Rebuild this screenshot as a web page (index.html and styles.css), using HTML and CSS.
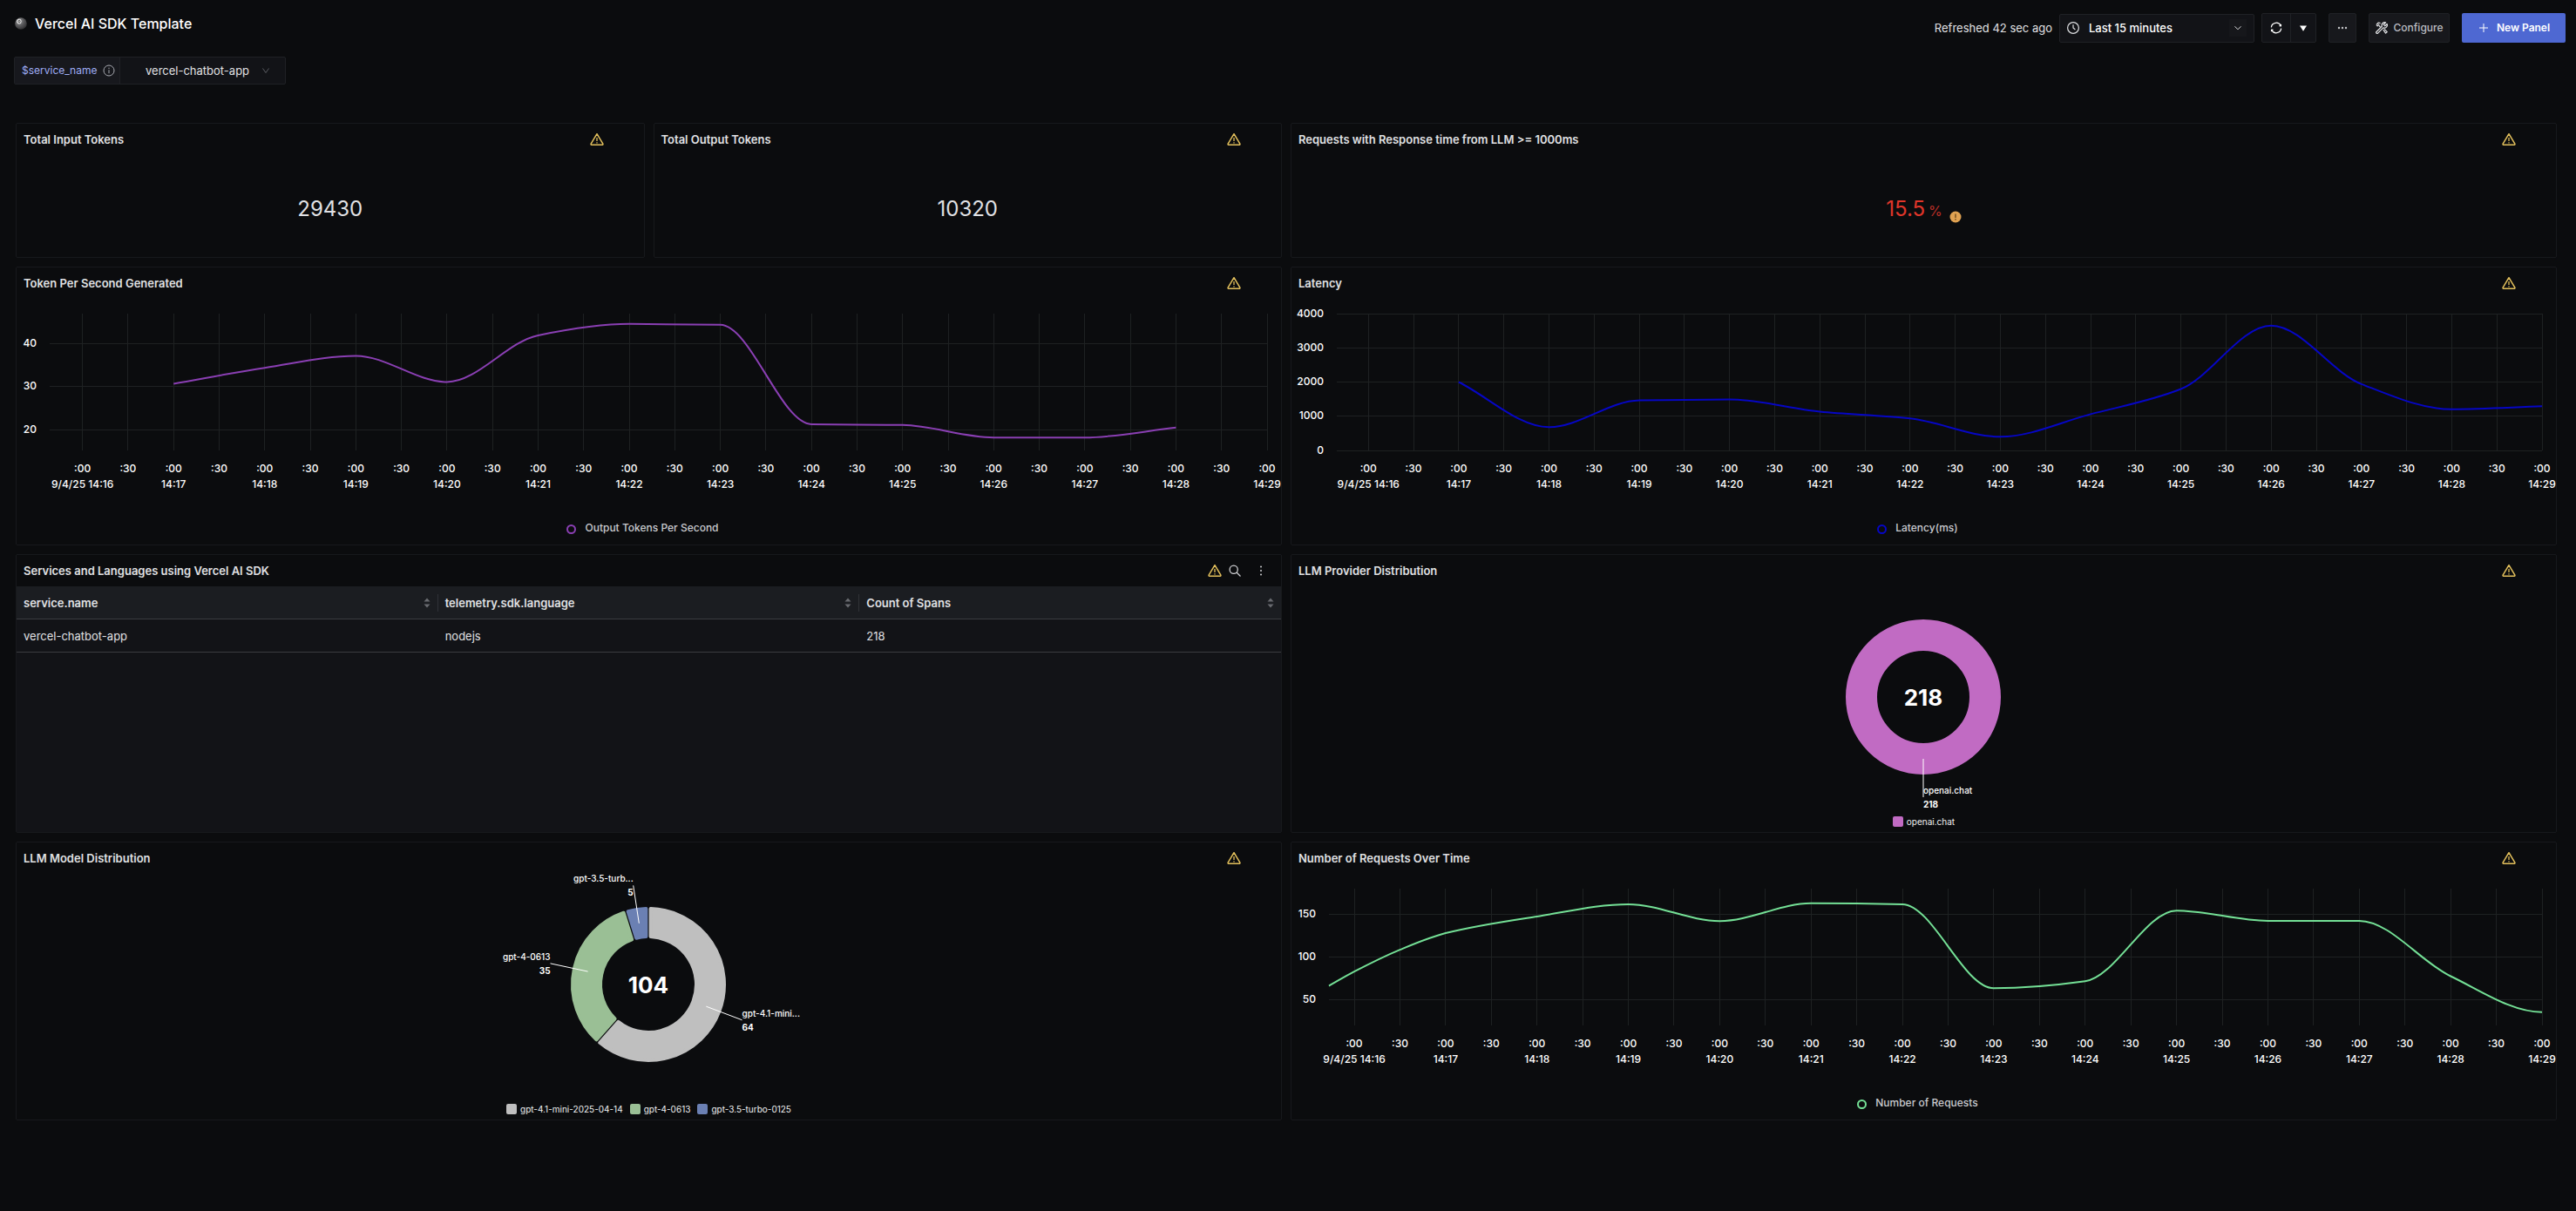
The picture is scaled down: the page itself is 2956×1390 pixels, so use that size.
FILE: index.html
```html
<!DOCTYPE html>
<html lang="en">
<head>
<meta charset="utf-8">
<meta name="viewport" content="width=device-width, initial-scale=1">
<title>Vercel AI SDK Template</title>
<link rel="stylesheet" href="styles.css">
</head>
<body>
<svg class="sprite" aria-hidden="true">
  <symbol id="warning" viewBox="0 0 16 16">
    <path d="M8 1.7 14.9 13.2a.7.7 0 0 1-.6 1H1.7a.7.7 0 0 1-.6-1Z" fill="none" stroke="currentColor" stroke-width="1.5" stroke-linejoin="round"/>
    <path d="M8 6v4M8 11.2v1.3" stroke="currentColor" stroke-width="1.3"/>
  </symbol>
  <symbol id="sorter" viewBox="0 0 8 12">
    <path d="M4 .5 7.5 4.5H.5ZM4 11.5 7.5 7.5H.5Z" fill="currentColor"/>
  </symbol>
</svg>

<header class="topbar">
  <div class="title-block">
    <svg class="ball" viewBox="0 0 14 14" aria-hidden="true">
      <defs><radialGradient id="ball-fill" cx=".35" cy=".3" r=".75"><stop offset="0" stop-color="#a5a5a5"/><stop offset=".5" stop-color="#5c5c5e"/><stop offset="1" stop-color="#303032"/></radialGradient></defs>
      <circle cx="7" cy="7" r="6.8" fill="url(#ball-fill)"/>
      <ellipse cx="5" cy="4.6" rx="2.6" ry="2.9" fill="#e8e8e8"/>
      <ellipse cx="5.1" cy="4.6" rx="1" ry="1.5" fill="none" stroke="#333" stroke-width=".9"/>
    </svg>
    <h1>Vercel AI SDK Template</h1>
  </div>
  <div class="actions">
    <span class="refreshed">Refreshed 42 sec ago</span>
    <div class="time-range">
      <svg class="icon16" viewBox="0 0 16 16" fill="none" stroke="currentColor" stroke-width="1.2" aria-hidden="true"><circle cx="8" cy="8" r="6.4"/><path d="M8 4.3V8l2.4 2"/></svg>
      <select aria-label="Time range"><option>Last 15 minutes</option></select>
      <svg class="icon20" viewBox="0 0 20 20" fill="none" stroke="currentColor" aria-hidden="true"><rect width="20" height="20" fill="#16171b" stroke="none"/><path d="m6.5 8.3 3.5 3.5 3.5-3.5"/></svg>
    </div>
    <div class="refresh-group">
      <button type="button" aria-label="Refresh">
        <svg class="icon14" viewBox="0 0 16 16" fill="none" stroke="currentColor" stroke-width="1.4" aria-hidden="true"><path d="M1.500 7.200A6.600 6.600 0 0 1 14 5.200M14.500 8.800A6.600 6.600 0 0 1 2 10.800"/><path d="m12 5.300 2.100.3.200-2.300M4 10.700l-2.100-.3-.2 2.300"/></svg>
      </button>
      <button type="button" aria-label="Refresh interval">
        <svg class="caret" viewBox="0 0 8 7" fill="currentColor" aria-hidden="true"><path d="M0 .4h8L4 6.8Z"/></svg>
      </button>
    </div>
    <button class="more" type="button" aria-label="More options">
      <svg class="icon16" viewBox="0 0 16 16" fill="currentColor" aria-hidden="true"><circle cx="4" cy="8" r="1.2"/><circle cx="8" cy="8" r="1.2"/><circle cx="12" cy="8" r="1.2"/></svg>
    </button>
    <button class="configure" type="button">
      <svg class="icon14" viewBox="0 0 14 14" fill="none" stroke="currentColor" stroke-width="1.2" stroke-linejoin="round" aria-hidden="true"><path d="M9.2 3.2 11.6.9A3.4 3.4 0 0 0 7.3 5.3L1 11.5a1.1 1.1 0 0 0 1.6 1.6L8.8 6.9a3.4 3.4 0 0 0 4.4-4.4L10.8 4.8Z"/><path d="M.9 3.5 3.3 1l2.3.6M.9 3.5l1.3 1.3L4.200 3M4 4.500l1.500 1.700M8.800 9.200l2.800 3.900 1.700-1.500-3.200-3.200"/></svg>
      Configure
    </button>
    <button class="new-panel" type="button">
      <svg class="icon14" viewBox="0 0 14 14" stroke="currentColor" aria-hidden="true"><path d="M7 2v10M2 7h10"/></svg>
      New Panel
    </button>
  </div>
</header>

<div class="variable">
  <label for="service-name">$service_name
    <svg class="icon14" viewBox="0 0 14 14" fill="none" stroke="#a9abb2" aria-hidden="true"><circle cx="7" cy="7" r="6"/><path d="M7 6.200v4M7 3.700v1.300"/></svg>
  </label>
  <div class="variable-value">
    <select id="service-name"><option>vercel-chatbot-app</option></select>
    <svg class="chevron" viewBox="0 0 10 10" fill="none" stroke="#5a5c62" aria-hidden="true"><path d="m1.500 2.500 3.500 5 3.500-5"/></svg>
  </div>
</div>

<main class="grid">
  <section class="panel stat">
    <header><h2>Total Input Tokens</h2><svg class="warn"><use href="#warning"/></svg></header>
    <div class="value">29430</div>
  </section>
  <section class="panel stat">
    <header><h2>Total Output Tokens</h2><svg class="warn"><use href="#warning"/></svg></header>
    <div class="value">10320</div>
  </section>
  <section class="panel stat wide">
    <header><h2>Requests with Response time from LLM &gt;= 1000ms</h2><svg class="warn"><use href="#warning"/></svg></header>
    <div class="value alert">15.5 <span class="unit">%</span>
      <svg class="badge" viewBox="0 0 14 14" aria-hidden="true"><circle cx="7" cy="7" r="6.5" fill="#e0a252"/><path d="M7 3.5V8M7 9v1.5" stroke="#5b3b12" stroke-width="1.2"/></svg>
    </div>
  </section>

  <section class="panel wide">
    <header><h2>Token Per Second Generated</h2><svg class="warn"><use href="#warning"/></svg></header>
    <div class="chart" data-chart="tokens"></div>
    <div class="series-legend"><span class="ring violet"></span>Output Tokens Per Second</div>
  </section>
  <section class="panel wide">
    <header><h2>Latency</h2><svg class="warn"><use href="#warning"/></svg></header>
    <div class="chart" data-chart="latency"></div>
    <div class="series-legend"><span class="ring blue"></span>Latency(ms)</div>
  </section>

  <section class="panel wide table-panel">
    <header>
      <h2>Services and Languages using Vercel AI SDK</h2>
      <div class="tools">
        <svg class="warn"><use href="#warning"/></svg>
        <button type="button" aria-label="Search"><svg class="icon14" viewBox="0 0 14 14" fill="none" stroke="currentColor" stroke-width="1.3"><circle cx="5.700" cy="5.700" r="4.600"/><path d="m9 9 4.500 4.500"/></svg></button>
        <button type="button" aria-label="Panel menu" class="menu"><svg class="icon14" viewBox="0 0 14 14" fill="currentColor"><circle cx="7" cy="2.500" r="1"/><circle cx="7" cy="7" r="1"/><circle cx="7" cy="11.500" r="1"/></svg></button>
      </div>
    </header>
    <table>
      <thead><tr>
        <th scope="col"><div>service.name<svg class="sorter"><use href="#sorter"/></svg></div></th>
        <th scope="col"><div>telemetry.sdk.language<svg class="sorter"><use href="#sorter"/></svg></div></th>
        <th scope="col"><div>Count of Spans<svg class="sorter"><use href="#sorter"/></svg></div></th>
      </tr></thead>
      <tbody><tr><td>vercel-chatbot-app</td><td>nodejs</td><td>218</td></tr></tbody>
    </table>
  </section>
  <section class="panel wide">
    <header><h2>LLM Provider Distribution</h2><svg class="warn"><use href="#warning"/></svg></header>
    <div class="donut" data-donut="providers"></div>
    <ul class="slice-legend"><li><span class="swatch orchid"></span>openai.chat</li></ul>
  </section>

  <section class="panel wide">
    <header><h2>LLM Model Distribution</h2><svg class="warn"><use href="#warning"/></svg></header>
    <div class="donut" data-donut="models"></div>
    <ul class="slice-legend"><li><span class="swatch grey"></span>gpt-4.1-mini-2025-04-14</li><li><span class="swatch green"></span>gpt-4-0613</li><li><span class="swatch steel"></span>gpt-3.5-turbo-0125</li></ul>
  </section>
  <section class="panel wide">
    <header><h2>Number of Requests Over Time</h2><svg class="warn"><use href="#warning"/></svg></header>
    <div class="chart" data-chart="requests"></div>
    <div class="series-legend"><span class="ring mint"></span>Number of Requests</div>
  </section>
</main>
<script src="charts.js"></script>
</body>
</html>
```
FILE: styles.css
```css
* { box-sizing: border-box; }

body {
  margin: 0;
  min-height: 100vh;
  padding: 15px 12px 32px 16px;
  background: #0b0c0e;
  color: #e0e1e4;
  font: 13px/18px Inter, "Liberation Sans", sans-serif;
}

h1, h2, ul { margin: 0; padding: 0; }
button, select { font: inherit; color: inherit; cursor: pointer; }
button { padding: 0; border: 0; background: none; display: flex; align-items: center; justify-content: center; }
select { appearance: none; border: 0; background: none; padding: 0; outline: none; flex: 1; min-width: 0; }
svg { display: block; flex: none; }
.sprite { position: absolute; width: 0; height: 0; }
.icon14 { width: 14px; height: 14px; }
.icon16 { width: 16px; height: 16px; }
.icon20 { width: 20px; height: 20px; }

/* Top bar */
.topbar { display: flex; justify-content: space-between; align-items: flex-start; }
.title-block { display: flex; align-items: center; gap: 9px; height: 24px; padding-left: 1px; }
.ball { width: 14px; height: 14px; }
h1 { font-size: 16px; line-height: 24px; font-weight: 500; color: #fff; }
.actions { display: flex; align-items: center; height: 34px; font-size: 12px; }
.refreshed { margin-right: 8px; font-size: 13px; }
.time-range {
  display: flex; align-items: center; gap: 8px;
  width: 224px; height: 33px; margin-right: 8px; padding: 0 8px 0 7px;
  border: 1px solid #1f2125; border-radius: 2px; background: #121317;
  font-size: 13px;
}
.time-range select { color: #fff; font-weight: 500; margin-left: 2px; }
.refresh-group { display: flex; width: 63px; height: 34px; margin-right: 14px; border: 1px solid #1f2125; border-radius: 2px; background: #121317; color: #fff; }
.refresh-group button { flex: 1; }
.refresh-group button:first-child { flex: none; width: 33px; border-right: 1px solid #1f2125; }
.caret { width: 8px; height: 7px; }
.more, .configure { height: 34px; margin-right: 14px; border: 1px solid #1f2125; border-radius: 2px; background: #17181c; }
.more { width: 32px; color: #c6c7ca; }
.configure { width: 93px; gap: 7px; font-weight: 500; color: #bcbdc2; }
.configure svg { color: #e4e5e8; }
.new-panel { width: 119px; height: 34px; gap: 8px; border-radius: 2px; background: #4e68d2; color: #fff; font-weight: 600; }

/* Dashboard variable */
.variable { display: flex; width: 312px; height: 32px; margin-top: 16px; border: 1px solid #1f2125; border-radius: 2px; background: #121317; }
.variable label { display: flex; align-items: center; gap: 7px; width: 121px; padding-left: 8px; border-right: 1px solid #1f2125; background: #17181d; color: #9fadf5; font-size: 12px; }
.variable-value { display: flex; align-items: center; flex: 1; padding: 0 17px 0 29px; }
.chevron { width: 10px; height: 10px; }

/* Panels */
.grid { display: grid; grid-template-columns: repeat(4, 1fr); gap: 10px; margin: 44px 10px 0 2px; }
.panel { display: flex; flex-direction: column; min-width: 0; height: 320px; border: 1px solid #17191c; border-radius: 2px; overflow: hidden; }
.wide { grid-column: span 2; }
.stat { height: 155px; }
.panel > header { display: flex; align-items: center; justify-content: space-between; flex: none; height: 36px; padding: 0 46px 0 8px; }
h2 { font-size: 13px; line-height: 18px; font-weight: 600; }
.warn { width: 16px; height: 16px; color: #e3c05c; }

.value { flex: 1; display: flex; align-items: baseline; justify-content: center; padding-top: 46px; font-size: 24px; line-height: 32px; }
.alert { color: #e0362a; gap: 4px; }
.unit { font-size: 16px; color: #b92f27; }
.badge { width: 14px; height: 14px; align-self: flex-start; margin: 18px 0 0 4px; }

/* Time series */
.chart { height: 236px; flex: none; }
.chart text { fill: #fff; font-size: 12px; font-weight: 500; dominant-baseline: central; }
.gridline { stroke: #1e2122; shape-rendering: crispEdges; }
.series { fill: none; stroke-width: 2; }
.series-legend { display: flex; align-items: center; justify-content: center; gap: 10px; margin-top: 18px; padding-right: 14px; font-size: 12px; font-weight: 500; color: #c9cace; }
.ring { width: 11px; height: 11px; margin-top: 2px; border: 2px solid; border-radius: 50%; }
.violet { border-color: #8a3fb3; }
.blue { border-color: #0606c4; }
.mint { border-color: #74e096; }

/* Donuts */
.donut { display: flex; justify-content: center; flex: none; height: 258px; }
.donut text { fill: #fff; font-size: 10px; font-weight: 500; dominant-baseline: central; }
.donut .bold { font-weight: 700; }
.donut .total { font-size: 26px; font-weight: 700; text-anchor: middle; }
.leader { stroke: #fff; }
.slice-legend { display: flex; justify-content: center; gap: 8px; list-style: none; font-size: 10px; line-height: 12px; padding-top: 6px; color: #eeeff0; }
.slice-legend li { display: flex; align-items: center; gap: 4px; }
.swatch { width: 12px; height: 12px; border-radius: 2px; }
.orchid { background: #c16bc3; }
.grey { background: #bfbfbf; }
.green { background: #9abf95; }
.steel { background: #6b80b3; }

/* Table */
.table-panel { background: #121317; }
.table-panel > header { background: #0b0c0e; padding-right: 16px; }
.tools { display: flex; align-items: center; gap: 8px; color: #d0d1d4; }
.menu { margin-left: 8px; }
table { width: 100%; table-layout: fixed; border-collapse: separate; border-spacing: 0; }
th, td { height: 38px; padding: 0; border-bottom: 1px solid #3a3c40; text-align: left; }
th { background: #1b1d21; font-weight: 600; }
th div { display: flex; align-items: center; justify-content: space-between; height: 20px; padding: 0 8px; }
th:not(:last-child) div { border-right: 1px solid #303237; }
td { padding-left: 8px; }
.sorter { width: 8px; height: 12px; color: #696b70; }
```
FILE: charts.js
```js
const NS = 'http://www.w3.org/2000/svg';
const PLOT_TOP = 17, PLOT_BOTTOM = 174, RIGHT_GAP = 16;

// Times are minutes after 14:16; "start" and "end" bound the x axis.
const charts = {
  tokens: {
    color: '#8a3fb3', axis: 38, start: -0.36, end: 13, min: 15.2, max: 47, ticks: [20, 30, 40],
    points: [[1, 30.7], [2, 34.4], [3, 37.2], [4, 31.1], [5, 41.95], [6, 44.6], [7, 44.4], [8, 21.3], [9, 21.1], [10, 18.2], [11, 18.2], [12, 20.5]]
  },
  latency: {
    color: '#0606c4', axis: 52, start: -0.35, end: 13, min: 0, max: 4000, ticks: [0, 1000, 2000, 3000, 4000],
    points: [[1, 2000], [2, 680], [3, 1465], [4, 1490], [5, 1135], [6, 935], [7, 400], [8, 1060], [9, 1795], [10, 3650], [11, 1940], [12, 1205], [13, 1290]]
  },
  requests: {
    color: '#74e096', axis: 43, start: -0.277, end: 13, min: 20.5, max: 180, ticks: [50, 100, 150], flatEnd: true,
    points: [[-0.277, 66.7], [0, 83.3], [0.5, 108.8], [1, 128.2], [2, 147.6], [3, 161.8], [4, 142.2], [5, 162.9], [6, 161.8], [7, 63.9], [8, 72], [9, 154.4], [10, 142.5], [11, 142.5], [12, 77.9], [13, 36]]
  }
};

const donuts = {
  providers: [{ name: 'openai.chat', value: 218, color: '#c16bc3' }],
  models: [
    { name: 'gpt-4.1-mini...', value: 64, color: '#bfbfbf' },
    { name: 'gpt-4-0613', value: 35, color: '#9abf95' },
    { name: 'gpt-3.5-turb...', value: 5, color: '#6b80b3' }
  ]
};

function add(parent, tag, attrs, text) {
  const el = document.createElementNS(NS, tag);
  for (const k in attrs) el.setAttribute(k, attrs[k]);
  if (text !== undefined) el.textContent = text;
  parent.appendChild(el);
  return el;
}

// Monotone cubic interpolation, so the curve never overshoots its samples.
function spline(p, flatEnd) {
  const n = p.length, dx = [], s = [], m = [];
  for (let i = 0; i < n - 1; i++) {
    dx[i] = p[i + 1][0] - p[i][0];
    s[i] = (p[i + 1][1] - p[i][1]) / dx[i];
  }
  m[0] = s[0];
  for (let i = 1; i < n - 1; i++) {
    if (s[i - 1] * s[i] <= 0) m[i] = 0;
    else m[i] = 3 * (dx[i - 1] + dx[i]) / ((2 * dx[i] + dx[i - 1]) / s[i - 1] + (dx[i] + 2 * dx[i - 1]) / s[i]);
  }
  m[n - 1] = flatEnd ? 0 : s[n - 2];
  let d = `M${p[0]}`;
  for (let i = 0; i < n - 1; i++) {
    const h = dx[i] / 3;
    d += `C${p[i][0] + h},${p[i][1] + m[i] * h} ${p[i + 1][0] - h},${p[i + 1][1] - m[i + 1] * h} ${p[i + 1]}`;
  }
  return d;
}

function drawChart(host) {
  const c = charts[host.dataset.chart];
  const width = host.clientWidth, height = host.clientHeight;
  const right = width - RIGHT_GAP;
  const x = t => c.axis + (t - c.start) / (c.end - c.start) * (right - c.axis);
  const y = v => PLOT_BOTTOM - (v - c.min) / (c.max - c.min) * (PLOT_BOTTOM - PLOT_TOP);
  host.textContent = '';
  const svg = add(host, 'svg', { width, height });
  for (const v of c.ticks) {
    add(svg, 'line', { class: 'gridline', x1: c.axis, x2: right, y1: y(v), y2: y(v) });
    add(svg, 'text', { x: c.axis - 15, y: y(v) - 1, 'text-anchor': 'end' }, v);
  }
  for (let i = 0; i <= 26; i++) {
    const px = x(i / 2), whole = i % 2 === 0;
    add(svg, 'line', { class: 'gridline', x1: px, x2: px, y1: PLOT_TOP, y2: PLOT_BOTTOM });
    add(svg, 'text', { x: px, y: 194, 'text-anchor': 'middle' }, whole ? ':00' : ':30');
    if (whole) add(svg, 'text', { x: px, y: 212, 'text-anchor': 'middle' }, (i ? '' : '9/4/25 ') + '14:' + (16 + i / 2));
  }
  add(svg, 'path', { class: 'series', stroke: c.color, d: spline(c.points.map(([t, v]) => [x(t), y(v)]), c.flatEnd) });
}

function drawDonut(host) {
  const slices = donuts[host.dataset.donut];
  const total = slices.reduce((sum, s) => sum + s.value, 0);
  const cx = 249, cy = 127, outer = 87, inner = 55;
  const at = (r, a) => `${cx + r * Math.sin(a)} ${cy - r * Math.cos(a)}`;
  const svg = add(host, 'svg', { width: 500, height: 258, viewBox: '0 0 500 258' });
  let from = 0;
  const labels = [];
  for (const s of slices) {
    const to = from + s.value / total * 2 * Math.PI, mid = (from + to) / 2;
    if (slices.length === 1) {
      add(svg, 'circle', { cx, cy, r: (outer + inner) / 2, fill: 'none', stroke: s.color, 'stroke-width': outer - inner + 4 });
    } else {
      const po = Math.asin(2.6 / outer), pi = Math.asin(2.6 / inner), big = to - from > Math.PI ? 1 : 0;
      add(svg, 'path', {
        fill: s.color, stroke: s.color, 'stroke-width': 4, 'stroke-linejoin': 'round',
        d: `M${at(outer, from + po)}A${outer} ${outer} 0 ${big} 1 ${at(outer, to - po)}L${at(inner, to - pi)}A${inner} ${inner} 0 ${big} 0 ${at(inner, from + pi)}Z`
      });
    }
    labels.push([s, mid]);
    from = to;
  }
  for (const [s, mid] of labels) {
    add(svg, 'path', { class: 'leader', d: `M${at(71, mid)}L${at(115, mid)}` });
    const lx = cx + 115 * Math.sin(mid), ly = cy - 115 * Math.cos(mid);
    const anchor = Math.sin(mid) > -0.01 ? 'start' : 'end';
    add(svg, 'text', { x: lx, y: ly - 8, 'text-anchor': anchor }, s.name);
    add(svg, 'text', { class: 'bold', x: lx, y: ly + 8, 'text-anchor': anchor }, s.value);
  }
  add(svg, 'text', { class: 'total', x: cx, y: cy }, total);
}

const drawCharts = () => document.querySelectorAll('.chart').forEach(drawChart);
drawCharts();
document.querySelectorAll('.donut').forEach(drawDonut);
window.addEventListener('resize', drawCharts);
```
